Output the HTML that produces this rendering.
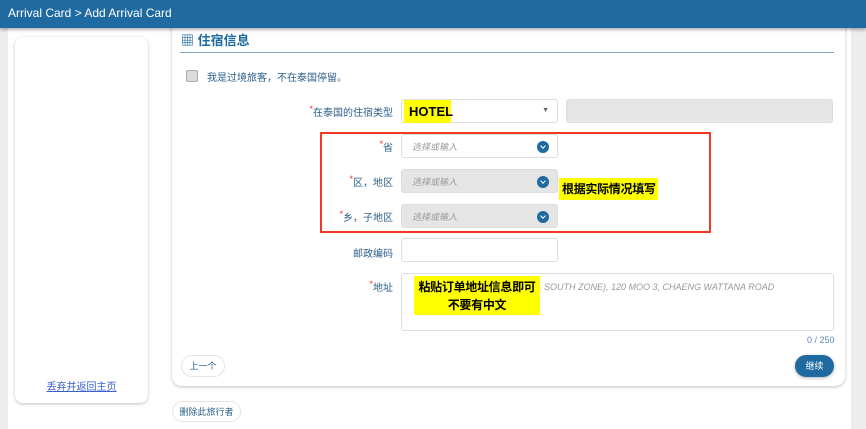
<!DOCTYPE html>
<html><head><meta charset="utf-8"><style>
*{box-sizing:border-box;margin:0;padding:0}
body{width:866px;height:429px;overflow:hidden;background:#ececec;font-family:"Liberation Sans","Noto Sans CJK SC",sans-serif;position:relative}
.main{position:absolute;left:8px;top:0;width:843px;height:429px;background:#fff}
.hdr{position:absolute;left:0;top:0;width:866px;height:28px;background:#1f6aa1;color:#fff;font-size:12px;line-height:27px;padding-left:8px;box-shadow:0 2px 3px rgba(0,0,0,.3);z-index:5}
.lc{position:absolute;left:15px;top:37px;width:133px;height:366px;background:#fff;border-radius:8px;box-shadow:0 1px 3px rgba(0,0,0,.25)}
.lc a{position:absolute;left:0;width:100%;top:341px;text-align:center;font-size:10px;color:#3a5fcd;text-decoration:underline}
.rc{position:absolute;left:172px;top:10px;width:673px;height:376px;background:#fff;border-radius:10px;box-shadow:0 1px 3px rgba(0,0,0,.25)}
.t{position:absolute;left:181px;top:30px;font-size:13px;font-weight:bold;color:#1f6aa1}
.hr{position:absolute;left:180px;top:52px;width:654px;height:1px;background:#7aa6cc}
.cb{position:absolute;left:186px;top:70px;width:12px;height:12px;border:1px solid #aaa;background:#ddd;border-radius:2px}
.lbl{position:absolute;font-size:10px;color:#2b5f8a;text-align:right;width:120px;white-space:nowrap}
.lbl b{color:#e33;font-weight:normal;font-size:9px;vertical-align:4px}
.in{position:absolute;border:1px solid #ddd;border-radius:3px;background:#fff;font-size:9px;color:#999;font-style:italic;padding-left:10px;white-space:nowrap}
.g{background:#e5e5e5}
.dd{position:absolute;right:8px;top:6px;width:12px;height:12px;border-radius:50%;background:#1f6aa1}
.dd:after{content:"";position:absolute;left:3.5px;top:2.5px;width:3px;height:3px;border-right:1.5px solid #fff;border-bottom:1.5px solid #fff;transform:rotate(45deg)}
.y{position:absolute;background:#ff0;color:#000;font-weight:bold;white-space:nowrap}
.btn{position:absolute;border-radius:12px;font-size:9px;border:1px solid #e4e4e4;background:#fff;color:#2b5f8a;text-align:center}
</style></head><body>
<div class="main"></div>
<div class="hdr">Arrival Card &gt; Add Arrival Card</div>
<div class="lc"><a>丢弃并返回主页</a></div>
<div class="rc"></div>
<div class="t">▦ 住宿信息</div>
<div class="hr"></div>
<div class="cb"></div>
<div style="position:absolute;left:207px;top:69px;font-size:10px;color:#2b5f8a">我是过境旅客，不在泰国停留。</div>
<div class="lbl" style="left:273px;top:104px"><b>*</b>在泰国的住宿类型</div>
<div class="in" style="left:401px;top:99px;width:157px;height:24px"><span style="position:absolute;right:8px;top:7px;font-style:normal;color:#666;font-size:7px">▼</span></div>
<div class="y" style="left:404px;top:100px;width:47px;height:23px;font-size:13px;line-height:23px;padding-left:5px">HOTEL</div>
<div class="in g" style="left:566px;top:99px;width:267px;height:24px"></div>
<div style="position:absolute;left:320px;top:132px;width:391px;height:101px;border:2px solid #f03a24"></div>
<div class="lbl" style="left:273px;top:139px"><b>*</b>省</div>
<div class="in" style="left:401px;top:134px;width:157px;height:24px;line-height:24px">选择或输入<div class="dd"></div></div>
<div class="lbl" style="left:273px;top:174px"><b>*</b>区，地区</div>
<div class="in g" style="left:401px;top:169px;width:157px;height:24px;line-height:24px">选择或输入<div class="dd"></div></div>
<div class="lbl" style="left:273px;top:209px"><b>*</b>乡，子地区</div>
<div class="in g" style="left:401px;top:204px;width:157px;height:24px;line-height:24px">选择或输入<div class="dd"></div></div>
<div class="y" style="left:559px;top:178px;width:99px;height:22px;font-size:12px;line-height:22px;padding-left:3px;letter-spacing:-0.3px">根据实际情况填写</div>
<div class="lbl" style="left:273px;top:245px">邮政编码</div>
<div class="in" style="left:401px;top:238px;width:157px;height:24px"></div>
<div class="lbl" style="left:273px;top:279px"><b>*</b>地址</div>
<div class="in" style="left:401px;top:273px;width:433px;height:58px"><span style="position:absolute;left:137px;top:8px">, SOUTH ZONE), 120 MOO 3, CHAENG WATTANA ROAD</span></div>
<div class="y" style="left:414px;top:276px;width:126px;height:39px;font-size:12px;line-height:18px;text-align:center;padding-top:2px;letter-spacing:-0.3px">粘贴订单地址信息即可<br>不要有中文</div>
<div style="position:absolute;left:807px;top:335px;font-size:9px;color:#5a86ad">0 / 250</div>
<div class="btn" style="left:181px;top:355px;width:44px;height:22px;line-height:21px">上一个</div>
<div class="btn" style="left:795px;top:355px;width:39px;height:22px;line-height:22px;background:#1f6aa1;color:#fff;border:none;box-shadow:0 1px 3px rgba(0,0,0,.3)">继续</div>
<div class="btn" style="left:172px;top:401px;width:69px;height:21px;line-height:20px">删除此旅行者</div>
</body></html>
